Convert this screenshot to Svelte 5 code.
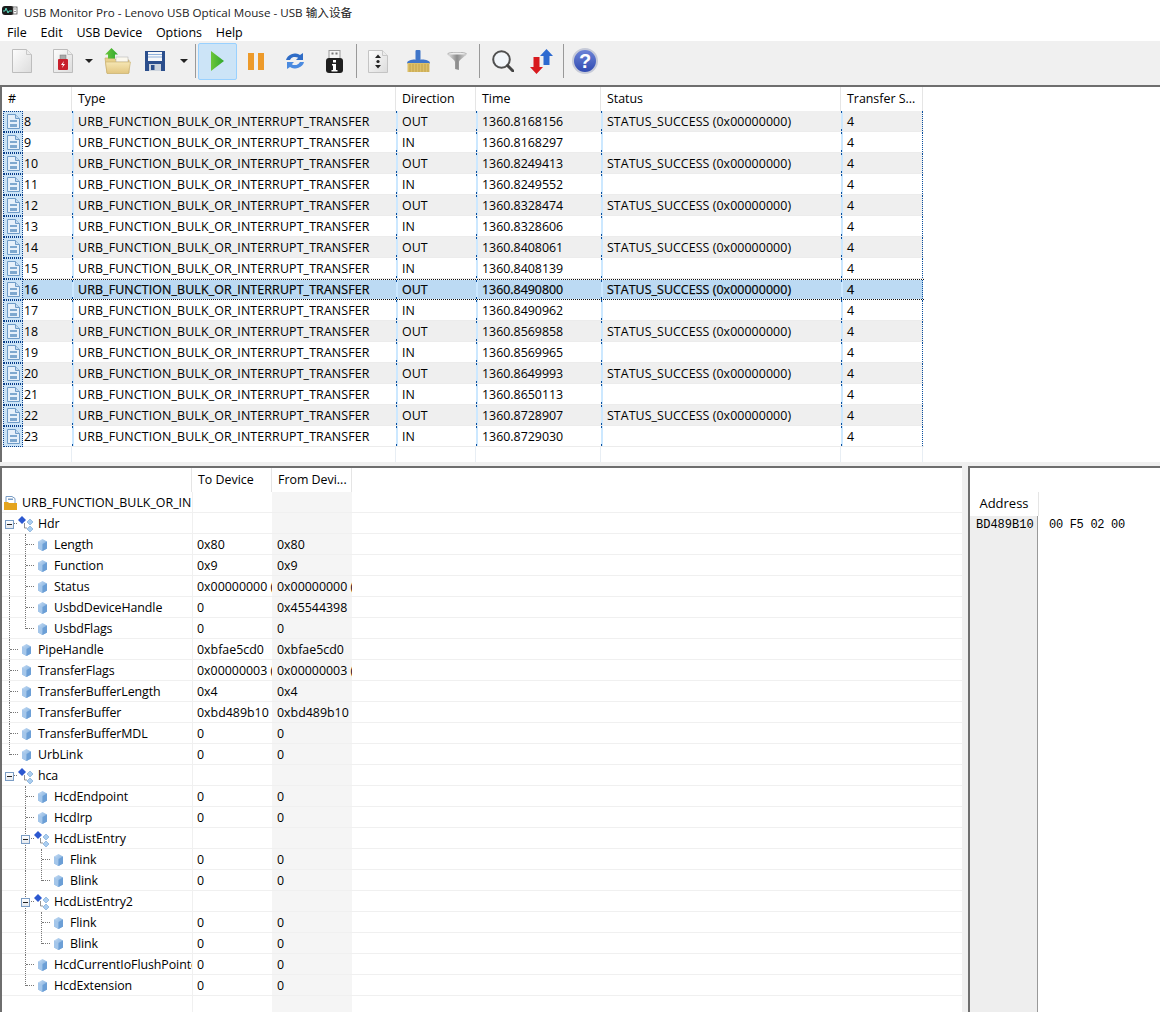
<script>
  const columns = [
    { label: '#', w: 72 }, { label: 'Type', w: 324 }, { label: 'Direction', w: 80 },
    { label: 'Time', w: 125 }, { label: 'Status', w: 240 }, { label: 'Transfer S...', w: 82 }
  ];
  const times = ['8168156','8168297','8249413','8249552','8328474','8328606','8408061','8408139','8490800','8490962','8569858','8569965','8649993','8650113','8728907','8729030'];
  const rows = times.map((t, i) => ({
    id: i + 8,
    out: i % 2 === 0,
    time: '1360.' + t
  }));
  const tree = [
    { n: 'Hdr', l: 0, group: true, root: true, a: '', b: '', guides: [] },
    { n: 'Length', l: 1, a: '0x80', b: '0x80', guides: [0] },
    { n: 'Function', l: 1, a: '0x9', b: '0x9', guides: [0] },
    { n: 'Status', l: 1, a: '0x00000000 (', b: '0x00000000 (', guides: [0] },
    { n: 'UsbdDeviceHandle', l: 1, a: '0', b: '0x45544398', guides: [0] },
    { n: 'UsbdFlags', l: 1, a: '0', b: '0', guides: [0], last: true },
    { n: 'PipeHandle', l: 0, a: '0xbfae5cd0', b: '0xbfae5cd0', guides: [] },
    { n: 'TransferFlags', l: 0, a: '0x00000003 (', b: '0x00000003 (', guides: [] },
    { n: 'TransferBufferLength', l: 0, a: '0x4', b: '0x4', guides: [] },
    { n: 'TransferBuffer', l: 0, a: '0xbd489b10', b: '0xbd489b10', guides: [] },
    { n: 'TransferBufferMDL', l: 0, a: '0', b: '0', guides: [] },
    { n: 'UrbLink', l: 0, a: '0', b: '0', guides: [], last: true },
    { n: 'hca', l: 0, group: true, root: true, a: '', b: '', guides: [] },
    { n: 'HcdEndpoint', l: 1, a: '0', b: '0', guides: [] },
    { n: 'HcdIrp', l: 1, a: '0', b: '0', guides: [] },
    { n: 'HcdListEntry', l: 1, group: true, a: '', b: '', guides: [] },
    { n: 'Flink', l: 2, a: '0', b: '0', guides: [1] },
    { n: 'Blink', l: 2, a: '0', b: '0', guides: [1], last: true },
    { n: 'HcdListEntry2', l: 1, group: true, a: '', b: '', guides: [] },
    { n: 'Flink', l: 2, a: '0', b: '0', guides: [1] },
    { n: 'Blink', l: 2, a: '0', b: '0', guides: [1], last: true },
    { n: 'HcdCurrentIoFlushPointer', l: 1, a: '0', b: '0', guides: [] },
    { n: 'HcdExtension', l: 1, a: '0', b: '0', guides: [], last: true }
  ];
</script>

<div class="win">
  <svg class="defs" width="0" height="0" aria-hidden="true">
    <defs>
      <linearGradient id="paper" x1="0" y1="0" x2="1" y2="1"><stop offset="0" stop-color="#fdfdfd"/><stop offset="1" stop-color="#dcdcdc"/></linearGradient>
      <linearGradient id="tan" x1="0" y1="0" x2="0" y2="1"><stop offset="0" stop-color="#f6e6b4"/><stop offset="1" stop-color="#e2c680"/></linearGradient>
      <linearGradient id="green" x1="0" y1="0" x2="1" y2="0"><stop offset="0" stop-color="#6cc63a"/><stop offset="1" stop-color="#2fa82e"/></linearGradient>
      <linearGradient id="steel" x1="0" y1="0" x2="1" y2="0"><stop offset="0" stop-color="#e8e8e8"/><stop offset=".5" stop-color="#8a8a8a"/><stop offset="1" stop-color="#d8d8d8"/></linearGradient>
      <linearGradient id="orb" x1="0" y1="0" x2="0" y2="1"><stop offset="0" stop-color="#6f86d8"/><stop offset="1" stop-color="#2d48b0"/></linearGradient>
      <linearGradient id="cube" x1="0" y1="0" x2="1" y2="1"><stop offset="0" stop-color="#c8def5"/><stop offset="1" stop-color="#6a9fd6"/></linearGradient>
    </defs>
  </svg>
  <div class="title">
    <svg class="appicon" viewBox="0 0 16 12" width="16" height="12">
      <rect x="0" y="1" width="12" height="9" rx="3" fill="#1c1c1c"/>
      <path d="M1 6h2l1-3 2 5 1-2h3" fill="none" stroke="#58dcc0" stroke-width="1"/>
      <rect x="11" y="2" width="4" height="7" fill="#fff" stroke="#555" stroke-width=".8"/>
      <path d="M12.500 4h1M12.500 6.500h1" stroke="#222"/>
    </svg>
    <span>USB Monitor Pro - Lenovo USB Optical Mouse - USB 输入设备</span>
  </div>
  <div class="menu">
    <span>File</span><span>Edit</span><span>USB Device</span><span>Options</span><span>Help</span>
  </div>
  <div class="toolbar">
    <button class="tool first" aria-label="New">
      <svg viewBox="0 0 20 24" width="20" height="24"><path d="M.5.5h14l5 5v18H.5z" fill="url(#paper)" stroke="#bdbdbd"/><path d="M14.500.5v5h5" fill="#ececec" stroke="#c8c8c8"/></svg>
    </button>
    <button class="tool doc" aria-label="Open capture">
      <svg viewBox="0 0 20 24" width="20" height="24"><path d="M.5.5h14l5 5v18H.5z" fill="url(#paper)" stroke="#bdbdbd"/><path d="M14.500.5v5h5" fill="#ececec" stroke="#c8c8c8"/><rect x="7" y="6" width="6" height="5" fill="#aaa" stroke="#777" stroke-width=".5"/><rect x="5" y="10" width="10" height="11" rx="1" fill="#c8202c"/><path d="M11 12l-3 4h2l-1 3 3-4h-2z" fill="#fff"/></svg>
    </button>
    <span class="caret c1st" aria-hidden="true"></span>
    <button class="tool folder" aria-label="Open">
      <svg viewBox="0 0 27 26" width="27" height="26"><path d="M1 10h9l2 2h13v13H3z" fill="#e8d08c" stroke="#c8ae6c" stroke-width=".7"/><rect x="12" y="9" width="12" height="5" fill="#fbf8ee" stroke="#aaa" stroke-width=".5"/><path d="M1.500 14h25l-2 11.500H3z" fill="url(#tan)" stroke="#c8ae6c" stroke-width=".6"/><path d="M1 6.500L7.500 0 14 6.500h-3v4H4v-4z" fill="url(#green)"/></svg>
    </button>
    <button class="tool save" aria-label="Save">
      <svg viewBox="0 0 20 20" width="20" height="20"><path d="M0 0h20v20H0z" fill="#2b4e8c"/><rect x="3" y="1" width="14" height="9" fill="#f6f7f9"/><path d="M3 3.500h14M3 6h14" stroke="#8fb0dc"/><rect x="4" y="13" width="12" height="7" fill="#cdd4dd"/><rect x="6" y="14" width="3.500" height="5" fill="#2b4e8c"/></svg>
    </button>
    <span class="caret c2nd" aria-hidden="true"></span>
    <span class="sep"></span>
    <button class="tool active" aria-label="Start">
      <svg viewBox="0 0 13 20" width="13" height="20"><path d="M0 0l13 10L0 20z" fill="url(#green)"/></svg>
    </button>
    <button class="tool" aria-label="Pause">
      <svg viewBox="0 0 16 17" width="16" height="17"><rect width="6" height="17" fill="#ed9a2a"/><rect x="10" width="6" height="17" fill="#ed9a2a"/></svg>
    </button>
    <button class="tool" aria-label="Refresh">
      <svg viewBox="0 0 20 18" width="20" height="18"><path d="M1 8a9 8 0 0 1 14-5l3-2v7h-7l2.200-2.200A5.500 5 0 0 0 5 8z" fill="#2f6cc6"/><path d="M19 10a9 8 0 0 1-14 5l-3 2v-7h7l-2.200 2.200A5.500 5 0 0 0 15 10z" fill="#4a8ae0"/></svg>
    </button>
    <button class="tool" aria-label="Device info">
      <svg viewBox="0 0 17 23" width="17" height="23"><rect x="3" y=".5" width="11" height="8" fill="#f4f4f4" stroke="#999"/><rect x="5.500" y="2.500" width="2" height="2" fill="#777"/><rect x="9.500" y="2.500" width="2" height="2" fill="#777"/><rect y="8" width="17" height="15" rx="3" fill="#1f1f1f"/><rect x="7" y="10" width="3" height="2.500" fill="#fff"/><path d="M6 14h4v6h1.500v1.500h-6V20H7v-4.500H6z" fill="#fff"/></svg>
    </button>
    <span class="sep tight"></span>
    <button class="tool" aria-label="Details">
      <svg viewBox="0 0 20 23" width="20" height="23"><path d="M.5.500h14l5 5v17H.5z" fill="url(#paper)" stroke="#c4c4c4"/><path d="M14.500.5v5h5" fill="#ececec" stroke="#c8c8c8"/><path d="M10 4.500L7 8h6zM10 18.500L7 15h6z" fill="#222"/><circle cx="10" cy="11.500" r="1.600" fill="#222"/></svg>
    </button>
    <button class="tool nudge" aria-label="Clear">
      <svg viewBox="0 0 23 22" width="23" height="22"><rect x="8.500" width="5" height="10" rx="1" fill="#3f75c8"/><path d="M0 13.500c0-3 4-4 8-4h7c4 0 8 1 8 4z" fill="#3f75c8"/><path d="M.5 13h22v9H.5z" fill="#dcbf68"/><path d="M3 14v8M6 14v8M9 14v8M12 14v8M15 14v8M18 14v8M21 14v8" stroke="#bb9c48" stroke-width=".8"/></svg>
    </button>
    <button class="tool" aria-label="Filter">
      <svg viewBox="0 0 20 18" width="20" height="18"><ellipse cx="10" cy="2" rx="9.500" ry="1.800" fill="#eee" stroke="#999" stroke-width=".7"/><path d="M.5 2.500C3 5 8 8 8 10v7l4 1v-8c0-2 5-5 7.500-7.500z" fill="url(#steel)"/></svg>
    </button>
    <span class="sep tight"></span>
    <button class="tool search" aria-label="Search">
      <svg viewBox="0 0 22 22" width="22" height="22"><circle cx="9.500" cy="9.500" r="8.300" fill="#f2f6fa" stroke="#505050" stroke-width="2"/><path d="M15.500 15.500L21 21" stroke="#454545" stroke-width="3" stroke-linecap="round"/></svg>
    </button>
    <button class="tool dir" aria-label="Direction">
      <svg viewBox="0 0 23 25" width="23" height="25"><path d="M16.500 0L23 7h-3.500v9h-6V7H10z" fill="#2d6ad0"/><path d="M6.500 25L0 18h3.500V8h6v10H13z" fill="#d81a1e"/></svg>
    </button>
    <span class="sep tight"></span>
    <button class="tool" aria-label="Help">
      <svg viewBox="0 0 26 26" width="26" height="26"><circle cx="13" cy="13" r="12" fill="url(#orb)" stroke="#c6cad8" stroke-width="2"/><text x="13" y="19.500" text-anchor="middle" class="q">?</text></svg>
    </button>
  </div>

  <div class="pane list">
    <div class="lhead">
      {#each columns as c}
        <div class="lh" style="width:{c.w}px"><span>{c.label}</span></div>
      {/each}
    </div>
    {#each rows as r}
      <div class="lrow" class:alt={r.out} class:sel={r.id === 16}>
        <div class="c c0">
          <span class="ico">
            <svg viewBox="0 0 13 15" width="13" height="15"><path d="M.5.5h8l4 4v10H.5z" fill="#e6f0fa" stroke="#6f9cc8"/><path d="M8.500.5v4h4" fill="#c4daf0" stroke="#6f9cc8"/><rect x="3" y="6" width="7" height="2" fill="#7ea8cf"/><rect x="3" y="10" width="7" height="3" fill="#7ea8cf"/></svg>
          </span>
          <span class="idt">{r.id}</span>
        </div>
        <div class="c c1">URB_FUNCTION_BULK_OR_INTERRUPT_TRANSFER</div>
        <div class="c c2">{r.out ? 'OUT' : 'IN'}</div>
        <div class="c c3">{r.time}</div>
        <div class="c c4">{r.out ? 'STATUS_SUCCESS (0x00000000)' : ''}</div>
        <div class="c c5">4</div>
      </div>
    {/each}
    <div class="lfill">
      {#each columns as c}
        <div class="lf" style="width:{c.w}px"></div>
      {/each}
    </div>
  </div>

  <div class="split"></div>

  <div class="lower">
    <div class="pane detail">
      <div class="dhead">
        <div class="dh d0"></div>
        <div class="dh d1">To Device</div>
        <div class="dh d2">From Devi...</div>
      </div>
      <div class="drow">
        <div class="d0 rootname">
          <svg class="rooticon" viewBox="0 0 13 14" width="13" height="14"><path d="M2 .5h6l3 2v6H2z" fill="#fff" stroke="#7a9cc4"/><rect x="4" y="2.500" width="5" height="1.500" fill="#7a9cc4"/><path d="M0 6h4l1 1h8v7H0z" fill="#e4a41e"/></svg>
          <span>URB_FUNCTION_BULK_OR_IN</span>
        </div>
        <div class="d1"></div><div class="d2"></div>
      </div>
      {#each tree as t}
        <div class="drow">
          <div class="d0 node lvl{t.l}">
            {#each t.guides as g}
              <i class="guide g{g}"></i>
            {/each}
            <i class="branch" class:lastb={t.last} class:rootb={t.root}></i>
            {#if t.group}
              <i class="box"></i>
              <svg class="gico" viewBox="0 0 16 16" width="16" height="16"><path d="M4 0l4 4-4 4-4-4z" fill="#2c58d0"/><path d="M12 3l3 3-3 3-3-3z" fill="#a9cdf0" stroke="#6f9fd0" stroke-width=".6"/><path d="M12 10l3 3-3 3-3-3z" fill="#a9cdf0" stroke="#6f9fd0" stroke-width=".6"/><path d="M6.500 7v5H9" fill="none" stroke="#777" stroke-width=".8"/></svg>
            {:else}
              <svg class="leaf" viewBox="0 0 9 12" width="9" height="12"><path d="M4.500 0L9 2.500v7L4.500 12 0 9.500v-7z" fill="url(#cube)"/><path d="M0 2.500l4.500 2.500v7L0 9.500z" fill="#a4c6ea"/><path d="M9 2.500L4.500 5v7L9 9.500z" fill="#6c9fd6"/></svg>
            {/if}
            <span class="nm">{t.n}</span>
          </div>
          <div class="d1">{t.a}</div>
          <div class="d2">{t.b}</div>
        </div>
      {/each}
      <div class="dfill"><div class="d0"></div><div class="d1"></div><div class="d2"></div></div>
    </div>
    <div class="vsplit"></div>
    <div class="pane hex">
      <div class="xhead"><div class="xaddr">Address</div></div>
      <div class="xbody">
        <div class="xcol">BD489B10</div>
        <div class="xdata">00 F5 02 00</div>
      </div>
    </div>
  </div>
</div>

<style>
  :global(body) { margin: 0; background: #fff; }
  .defs { position: absolute; }
  .win {
    width: 1160px; height: 1012px; overflow: hidden; display: flex; flex-direction: column;
    font-family: "Open Sans", "Noto Sans CJK SC", sans-serif; font-size: 12.4px; color: #000; background: #fff;
  }
  .title { height: 22px; display: flex; align-items: center; gap: 6px; padding-left: 2px; flex: none; }
  .title span { font-size: 11.65px; color: #222; }
  .menu { height: 19px; box-sizing: border-box; padding-top: 2px; display: flex; align-items: center; padding-left: 7px; gap: 13.7px; flex: none; font-size: 12.5px; }
  .toolbar { height: 44px; box-sizing: border-box; padding-bottom: 4px; background: #f0f0f0; display: flex; align-items: center; flex: none; }
  .tool { width: 39px; height: 37px; border: 0; padding: 0; background: none; display: flex; align-items: center; justify-content: center; flex: none; box-sizing: border-box; }
  .tool.first { margin-left: 2px; }
  .tool.doc { margin-left: 2px; }
  .tool.save { margin-left: -1px; }
  .tool.active { background: #cce4f7; border: 1px solid #99d1ff; border-radius: 2px; }
  .tool.nudge { margin-left: 1px; }
  .tool.search { margin-left: 2px; }
  .tool.dir { margin-left: -1px; }
  .caret { width: 0; height: 0; border-left: 4px solid transparent; border-right: 4px solid transparent; border-top: 4px solid #222; flex: none; }
  .c1st { margin: 0 4.500px 0 3px; }
  .c2nd { margin: 0 3.500px 0 5.500px; }
  .sep { width: 1px; height: 34px; background: #999; margin: 0 2px 0 3px; flex: none; }
  .sep.tight { margin-left: 2px; }
  .q { font: bold 20px "Liberation Sans", sans-serif; fill: #fff; }

  .pane { box-sizing: border-box; border-left: 2px solid #6e6e6e; border-top: 2px solid #6e6e6e; }
  .list { height: 377px; flex: none; display: flex; flex-direction: column; }
  .lhead { display: flex; height: 24px; flex: none; margin-left: -2px; }
  .lh { box-sizing: border-box; border-right: 1px solid #e5e5e5; padding-left: 6px; line-height: 23px; flex: none; }
  .lh:first-child { padding-left: 8px; }
  .lrow { display: flex; height: 21px; flex: none; margin-left: 1px; width: 921px; box-sizing: border-box; border-bottom: 1px solid #ececec; line-height: 20px; }
  .c {
    box-sizing: border-box; padding: 1px 0 0 6px; flex: none; white-space: nowrap; overflow: hidden;
    background:
      linear-gradient(#0a4f9e, #0a4f9e) 0 0 / 1px 2px no-repeat,
      linear-gradient(#0a4f9e, #0a4f9e) 0 100% / 1px 2px no-repeat,
      linear-gradient(#cce8ff, #cce8ff) 0 0 / 2px 100% no-repeat;
  }
  .lrow.alt .c, .lrow.alt .idt { background-color: #efefef; }
  .lrow.alt .c0 { background-color: transparent; }
  .lrow.sel { border-top: 1px dotted #111; border-bottom: 1px dotted #111; line-height: 19px; }
  .lrow.sel .c, .lrow.sel .idt { background-color: #bcdaf3; padding-top: 0; -webkit-text-stroke: 0.25px #111; }
  .c0 { width: 69px; padding: 0; display: flex; overflow: visible; background: none; }
  .c1 { width: 324px; letter-spacing: 0.13px; }
  .c2 { width: 80px; }
  .c3 { width: 125px; }
  .c4 { width: 240px; letter-spacing: 0.07px; }
  .c5 { width: 82px; border-right: 1px dotted #0a4f9e; }
  .ico { width: 20px; box-sizing: border-box; margin-bottom: -1px; background: #cce4f7; border: 1px dotted #0a3f8a; display: flex; align-items: center; justify-content: center; flex: none; }
  .idt { flex: 1; padding: 1px 0 0 1px; }
  .lrow.sel .ico { margin-top: -1px; }
  .lfill { flex: 1; display: flex; margin-left: -2px; }
  .lf { box-sizing: border-box; border-right: 1px solid #e8eef4; flex: none; }

  .split { height: 4px; background: #f0f0f0; flex: none; }
  .lower { flex: 1; display: flex; min-height: 0; }
  .detail { width: 962px; flex: none; }
  .vsplit { width: 6px; background: #f0f0f0; flex: none; }
  .dhead { display: flex; height: 24px; }
  .dh { box-sizing: border-box; border-right: 1px solid #e5e5e5; line-height: 23px; }
  .dh.d1, .dh.d2 { padding-left: 6px; }
  .d0 { width: 190px; flex: none; box-sizing: border-box; }
  .d1 { width: 80px; flex: none; box-sizing: border-box; }
  .d2 { width: 80px; flex: none; box-sizing: border-box; }
  .drow { display: flex; height: 21px; border-bottom: 1px solid #f0f0f0; box-sizing: border-box; line-height: 20px; white-space: nowrap; }
  .drow .d0 { overflow: hidden; position: relative; }
  .drow .d1 { padding: 1px 0 0 4px; overflow: hidden; border-left: 1px solid #f0f0f0; }
  .drow .d2 { padding: 1px 0 0 5px; overflow: hidden; background: #f5f5f5; }
  .dfill { display: flex; height: 17px; }
  .dfill .d1 { border-left: 1px solid #f0f0f0; }
  .dfill .d2 { background: #f5f5f5; }
  .rootname { display: flex; align-items: center; gap: 5px; padding: 2px 0 0 2px; }
  .rooticon { flex: none; }
  .node .nm { position: absolute; top: 1px; letter-spacing: -0.08px; }
  .lvl0 .nm { left: 36px; }
  .lvl1 .nm { left: 52px; }
  .lvl2 .nm { left: 68px; }
  .guide { position: absolute; top: 0; bottom: 0; border-left: 1px dotted #777; }
  .g0 { left: 7px; }
  .g1 { left: 23px; }
  .branch { position: absolute; top: 0; bottom: 0; border-left: 1px dotted #777; }
  .branch::after { content: ""; position: absolute; top: 10px; left: 0; width: 8px; border-top: 1px dotted #777; }
  .branch.lastb { bottom: auto; height: 11px; }
  .branch.rootb { border-left: 0; }
  .lvl0 .branch { left: 7px; }
  .lvl1 .branch { left: 23px; }
  .lvl2 .branch { left: 39px; }
  .box { position: absolute; top: 7px; width: 9px; height: 9px; box-sizing: border-box; border: 1px solid #7a9cc4; background: linear-gradient(#fff, #e4e8ee); }
  .box::after { content: ""; position: absolute; left: 1px; right: 1px; top: 3px; height: 1px; background: #222; }
  .lvl0 .box { left: 3px; }
  .lvl1 .box { left: 19px; }
  .gico { position: absolute; top: 3px; }
  .lvl0 .gico { left: 16px; }
  .lvl1 .gico { left: 32px; }
  .leaf { position: absolute; top: 5px; }
  .lvl0 .leaf { left: 20px; }
  .lvl1 .leaf { left: 36px; }
  .lvl2 .leaf { left: 52px; }

  .hex { flex: 1; display: flex; flex-direction: column; }
  .xhead { height: 48px; display: flex; align-items: flex-end; flex: none; }
  .xaddr { width: 69px; height: 24px; box-sizing: border-box; border-right: 1px solid #e5e5e5; text-align: center; font-size: 13px; line-height: 23px; }
  .xbody { flex: 1; display: flex; font-family: "Liberation Mono", monospace; font-size: 12px; }
  .xcol { background: #eee; border-right: 1px solid #999; padding-left: 6px; width: 61px; line-height: 18px; }
  .xdata { padding-left: 11px; line-height: 18px; letter-spacing: -0.3px; }
</style>
